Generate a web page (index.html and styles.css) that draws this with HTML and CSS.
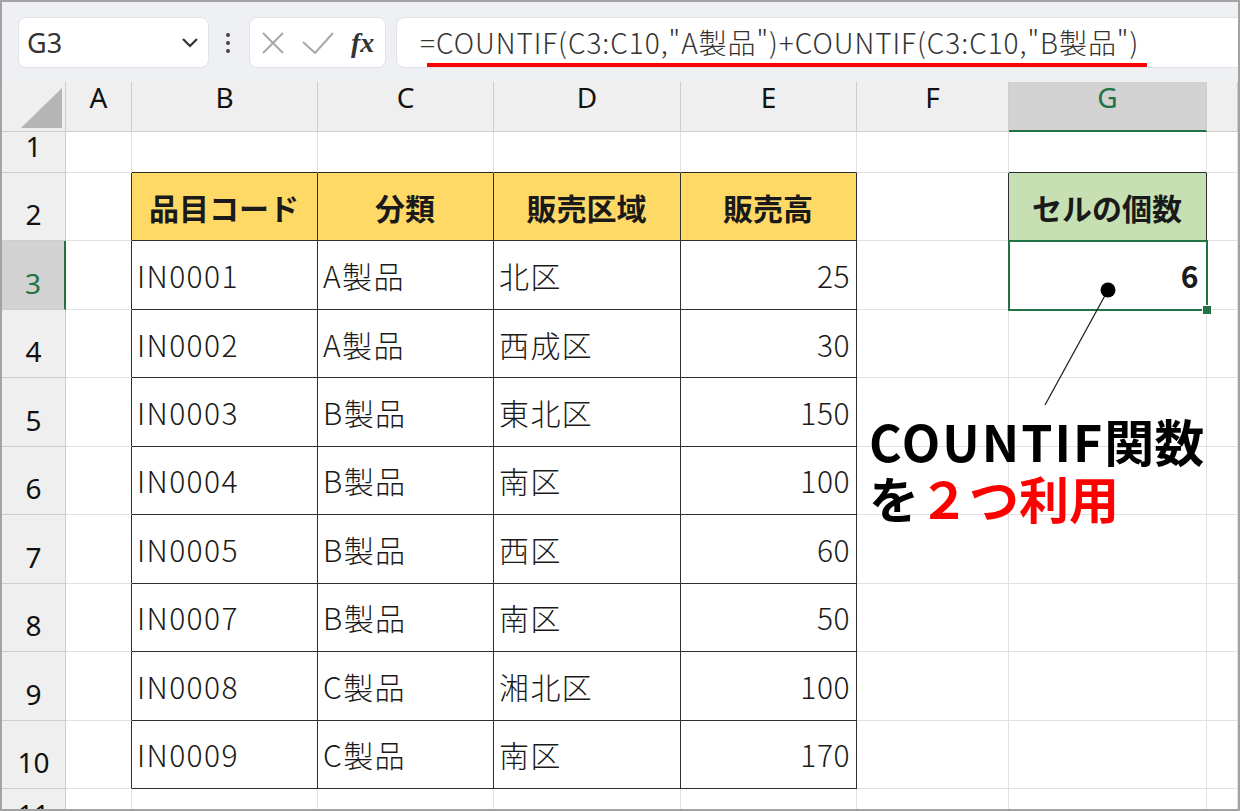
FILE: index.html
```html
<!DOCTYPE html>
<html lang="ja">
<head>
    <meta charset="UTF-8">
    <meta name="viewport" content="width=device-width, initial-scale=1.0">
    <title>COUNTIF関数</title>
    <link rel="stylesheet" href="styles.css">
</head>
<body>
<div class="window">

    <!-- Name box + formula bar -->
    <div class="toolbar">
        <div class="name-box">
            <span>G3</span>
            <svg class="chevron" width="18" height="12" viewBox="0 0 18 12">
                <path d="M2 2 L9 9 L16 2" fill="none" stroke="#333" stroke-width="2.2"/>
            </svg>
        </div>
        <div class="more"><i></i><i></i><i></i></div>
        <div class="fx-box">
            <svg width="22" height="22" viewBox="0 0 22 22">
                <path d="M1 1 L21 21 M21 1 L1 21" stroke="#a8a8a8" stroke-width="2"/>
            </svg>
            <svg width="32" height="22" viewBox="0 0 32 22">
                <path d="M1 10 L13 21 L31 1" fill="none" stroke="#a8a8a8" stroke-width="2"/>
            </svg>
            <span class="fx">fx</span>
        </div>
        <div class="formula-box">
            <span class="formula">=COUNTIF(C3:C10,"A製品")+COUNTIF(C3:C10,"B製品")</span>
        </div>
    </div>

    <!-- Worksheet -->
    <div class="sheet">
        <div class="corner">
            <svg width="41" height="40" viewBox="0 0 41 40"><polygon points="41,0 41,40 0,40" fill="#b5b5b5"/></svg>
        </div>
        <div class="ch">A</div>
        <div class="ch">B</div>
        <div class="ch">C</div>
        <div class="ch">D</div>
        <div class="ch">E</div>
        <div class="ch">F</div>
        <div class="ch sel-col">G</div>
        <div class="ch"></div>

        <!-- row 1 -->
        <div class="rh">1</div>
        <div class="c"></div>
        <div class="c tt"></div>
        <div class="c tt"></div>
        <div class="c tt"></div>
        <div class="c tt"></div>
        <div class="c"></div>
        <div class="c tt"></div>
        <div class="c"></div>

        <!-- row 2 -->
        <div class="rh">2</div>
        <div class="c tl"></div>
        <div class="c t th">品目コード</div>
        <div class="c t th">分類</div>
        <div class="c t th">販売区域</div>
        <div class="c t th">販売高</div>
        <div class="c tl"></div>
        <div class="c t gh">セルの個数</div>
        <div class="c"></div>

        <!-- row 3 -->
        <div class="rh sel-row">3</div>
        <div class="c tl"></div>
        <div class="c t">IN0001</div>
        <div class="c t">A製品</div>
        <div class="c t">北区</div>
        <div class="c t num">25</div>
        <div class="c"></div>
        <div class="c num active">6<span class="handle"></span></div>
        <div class="c"></div>

        <!-- row 4 -->
        <div class="rh">4</div>
        <div class="c tl"></div>
        <div class="c t">IN0002</div>
        <div class="c t">A製品</div>
        <div class="c t">西成区</div>
        <div class="c t num">30</div>
        <div class="c"></div>
        <div class="c"></div>
        <div class="c"></div>

        <!-- row 5 -->
        <div class="rh">5</div>
        <div class="c tl"></div>
        <div class="c t">IN0003</div>
        <div class="c t">B製品</div>
        <div class="c t">東北区</div>
        <div class="c t num">150</div>
        <div class="c"></div>
        <div class="c"></div>
        <div class="c"></div>

        <!-- row 6 -->
        <div class="rh">6</div>
        <div class="c tl"></div>
        <div class="c t">IN0004</div>
        <div class="c t">B製品</div>
        <div class="c t">南区</div>
        <div class="c t num">100</div>
        <div class="c"></div>
        <div class="c"></div>
        <div class="c"></div>

        <!-- row 7 -->
        <div class="rh">7</div>
        <div class="c tl"></div>
        <div class="c t">IN0005</div>
        <div class="c t">B製品</div>
        <div class="c t">西区</div>
        <div class="c t num">60</div>
        <div class="c"></div>
        <div class="c"></div>
        <div class="c"></div>

        <!-- row 8 -->
        <div class="rh">8</div>
        <div class="c tl"></div>
        <div class="c t">IN0007</div>
        <div class="c t">B製品</div>
        <div class="c t">南区</div>
        <div class="c t num">50</div>
        <div class="c"></div>
        <div class="c"></div>
        <div class="c"></div>

        <!-- row 9 -->
        <div class="rh">9</div>
        <div class="c tl"></div>
        <div class="c t">IN0008</div>
        <div class="c t">C製品</div>
        <div class="c t">湘北区</div>
        <div class="c t num">100</div>
        <div class="c"></div>
        <div class="c"></div>
        <div class="c"></div>

        <!-- row 10 -->
        <div class="rh">10</div>
        <div class="c tl"></div>
        <div class="c t">IN0009</div>
        <div class="c t">C製品</div>
        <div class="c t">南区</div>
        <div class="c t num">170</div>
        <div class="c"></div>
        <div class="c"></div>
        <div class="c"></div>

        <!-- row 11 (cut off) -->
        <div class="rh">11</div>
        <div class="c"></div>
        <div class="c"></div>
        <div class="c"></div>
        <div class="c"></div>
        <div class="c"></div>
        <div class="c"></div>
        <div class="c"></div>
        <div class="c"></div>

        <!-- callout -->
        <svg class="pointer" width="96" height="140" viewBox="0 0 96 140">
            <line x1="80" y1="16" x2="17" y2="131" stroke="#222" stroke-width="1.3"/>
            <circle cx="80" cy="16" r="7.5" fill="#000"/>
        </svg>
        <div class="callout">
            <div class="callout-line"><span class="latin">COUNTIF</span>関数</div>
            <div class="callout-line">を<span class="red">２つ利用</span></div>
        </div>
    </div>
</div>
</body>
</html>
```

FILE: styles.css
```css
* {
    margin: 0;
    padding: 0;
    box-sizing: border-box;
}

:root {
    --grid-line: #e1e1e1;
    --head-line: #cdcdcd;
    --head-bg: #efefef;
    --head-sel: #d2d2d2;
    --table-line: #2e2e2e;
    --excel-green: #217346;
}

body {
    width: 1240px;
    height: 811px;
    overflow: hidden;
    background: #fff;
    font-family: "Noto Sans CJK JP", "Noto Sans", sans-serif;
    color: #1a1a1a;
}

.window {
    width: 1240px;
    height: 811px;
    border: 2px solid #a3a3a3;
    overflow: hidden;
}

/* Formula bar */
.toolbar {
    height: 80px;
    background: #eef0f3;
    display: flex;
    align-items: flex-start;
    padding: 15px 0 0 16px;
}

.name-box {
    width: 191px;
    height: 51px;
    background: #fff;
    border: 1px solid #e1e3e6;
    border-radius: 8px;
    display: flex;
    align-items: center;
    justify-content: space-between;
    padding: 0 9px 0 8px;
    font-family: "Noto Sans", sans-serif;
    font-size: 27px;
    color: #333;
}

.more {
    width: 20px;
    height: 51px;
    margin: 0 11px 0 9px;
    display: flex;
    flex-direction: column;
    align-items: center;
    justify-content: center;
    gap: 4px;
}

.more i {
    width: 4px;
    height: 4px;
    border-radius: 50%;
    background: #444;
}

.fx-box {
    width: 137px;
    height: 51px;
    background: #fff;
    border: 1px solid #e1e3e6;
    border-radius: 8px;
    display: flex;
    align-items: center;
    gap: 18px;
    padding-left: 12px;
}

.fx {
    font-family: "Liberation Serif", serif;
    font-style: italic;
    font-weight: 700;
    font-size: 28px;
    color: #333;
    margin-left: -1px;
}

.formula-box {
    flex: 1;
    height: 51px;
    margin-left: 10px;
    background: #fff;
    border: 1px solid #e1e3e6;
    border-right: none;
    border-radius: 8px 0 0 8px;
    padding-left: 23px;
}

.formula {
    position: relative;
    display: inline-block;
    line-height: 49px;
    font-size: 28px;
    font-weight: 300;
    letter-spacing: 0.95px;
    color: #333;
    white-space: nowrap;
}

/* red marker under the formula */
.formula::after {
    content: "";
    position: absolute;
    left: 7px;
    right: -8px;
    top: 45px;
    height: 4px;
    background: #ff0000;
}

/* Worksheet grid */
.sheet {
    position: relative;
    display: grid;
    grid-template-columns: 64px 66px 186px 176px 187px 176px 152px 198px 1fr;
    grid-template-rows: 50px 41px repeat(9, 68.44px) 52px;
}

.corner,
.ch,
.rh {
    background: var(--head-bg);
    border-right: 1px solid var(--head-line);
    border-bottom: 1px solid var(--head-line);
    font-family: "Noto Sans", sans-serif;
    font-size: 28px;
    line-height: 1;
    color: #111;
    display: flex;
    justify-content: center;
}

.corner {
    align-items: flex-end;
    justify-content: flex-end;
    padding: 0 3px 3px 0;
}

.ch {
    align-items: flex-start;
    padding-top: 1px;
}

.rh {
    align-items: flex-end;
    padding-bottom: 12px;
}

.sel-col {
    background: var(--head-sel);
    border-bottom: 2px solid var(--excel-green);
    color: var(--excel-green);
}

.sel-row {
    background: var(--head-sel);
    border-right: 2px solid var(--excel-green);
    color: var(--excel-green);
}

.c {
    border-right: 1px solid var(--grid-line);
    border-bottom: 1px solid var(--grid-line);
    display: flex;
    align-items: center;
    padding: 0 6px 0 5px;
    font-size: 30px;
    font-weight: 300;
    letter-spacing: 1.4px;
    white-space: nowrap;
}

.tt { border-bottom-color: var(--table-line); }
.tl { border-right-color: var(--table-line); }
.t {
    border-right-color: var(--table-line);
    border-bottom-color: var(--table-line);
}

.th {
    background: #ffd966;
    font-weight: 700;
    letter-spacing: 0;
    justify-content: center;
}

.gh {
    background: #c6e0b4;
    font-weight: 700;
    letter-spacing: 0;
    justify-content: center;
}

.num {
    justify-content: flex-end;
    letter-spacing: 0.5px;
}

.active {
    position: relative;
    outline: 2px solid var(--excel-green);
    outline-offset: -1px;
    font-weight: 700;
    padding-right: 7px;
}

.handle {
    position: absolute;
    right: -6px;
    bottom: -6px;
    width: 10px;
    height: 10px;
    background: var(--excel-green);
    border: 1px solid #fff;
}

/* Callout */
.pointer {
    position: absolute;
    left: 1026px;
    top: 192px;
}

.callout {
    position: absolute;
    left: 867px;
    top: 330px;
    font-size: 50px;
    font-weight: 700;
    line-height: 57px;
    color: #000;
    white-space: nowrap;
}

.callout-line {
    height: 57px;
}

.callout .latin { letter-spacing: 2px; }
.callout .red { color: #ff0000; }
```
